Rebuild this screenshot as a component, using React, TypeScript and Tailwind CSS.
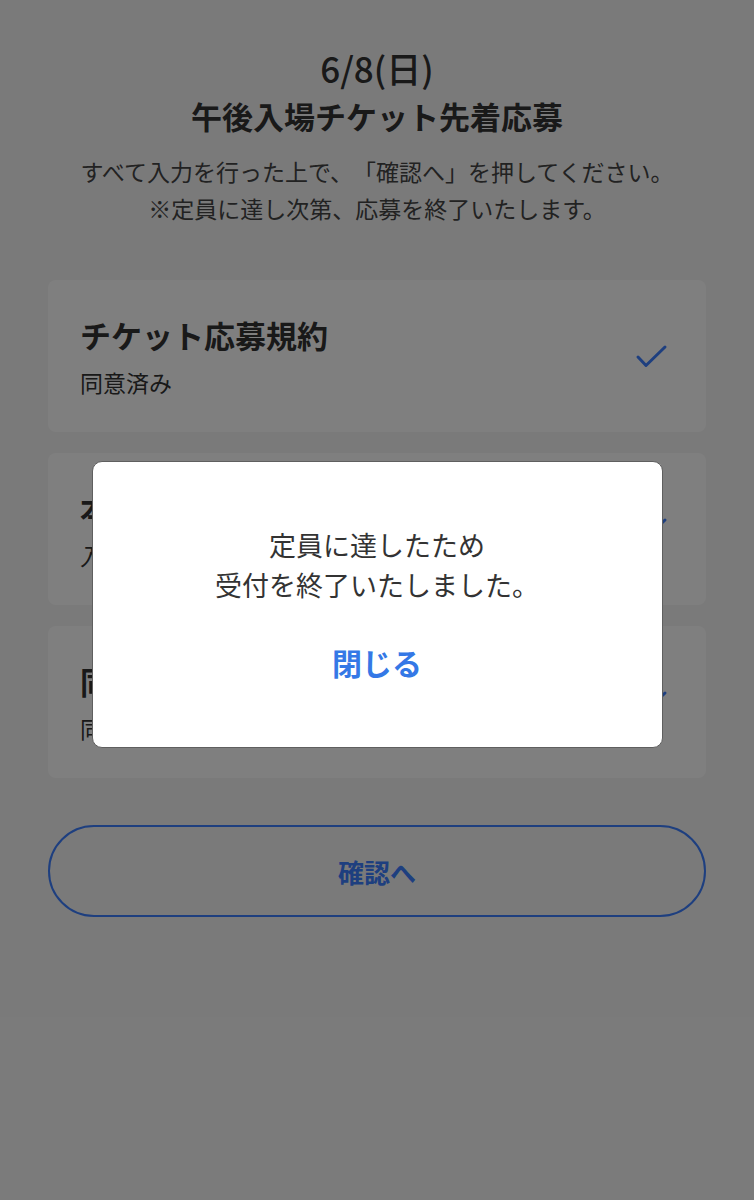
import React from 'react';

// 応募ステップ一覧
const steps = [
  { title: 'チケット応募規約', status: '同意済み' },
  { title: '本人情報入力', status: '入力済み' },
  { title: '同伴者情報', status: '同伴者なし' },
];

const font = { fontFamily: '"Noto Sans CJK JP", "Noto Sans", sans-serif' };

function CheckIcon() {
  return (
    <svg width="36" height="28" viewBox="0 0 36 28" fill="none">
      <path
        d="M4 15 L12 23.5 L31 5"
        stroke="#3c7eff"
        strokeWidth="3"
        strokeLinecap="round"
        strokeLinejoin="round"
      />
    </svg>
  );
}

export default function App() {
  return (
    <div
      className="relative min-h-[1200px] w-full bg-[#f5f5f5] text-[#333] [text-spacing-trim:space-all]"
      style={font}
    >
      {/* 本体 */}
      <div className="flex flex-col items-center pt-[45px] px-12">
        <h1 className="text-[35px] leading-[46px] font-medium text-[#333]">6/8(日)</h1>
        <h2 className="mt-[5px] text-[31px] leading-[40px] font-bold text-[#333]">
          午後入場チケット先着応募
        </h2>
        <p className="mt-[17px] text-center text-[23px] leading-[37px] text-[#444] whitespace-nowrap">
          すべて入力を行った上で、「確認へ」を押してください。
          <br />
          ※定員に達し次第、応募を終了いたします。
        </p>

        <div className="mt-[53px] flex w-full flex-col gap-[21px]">
          {steps.map((step) => (
            <div
              key={step.title}
              className="flex h-[152px] items-center justify-between rounded-[8px] bg-white pl-8 pr-[36px]"
            >
              <div>
                <div className="text-[31px] leading-[40px] font-bold text-[#333]">{step.title}</div>
                <div className="mt-[11px] text-[23px] leading-[32px] text-[#333]">{step.status}</div>
              </div>
              <CheckIcon />
            </div>
          ))}
        </div>

        <button className="mt-[47px] flex h-[92px] w-full items-center justify-center rounded-full border-2 border-[#3c7eff] bg-[#f5f5f5]">
          <span className="text-[26px] font-bold text-[#3c7eff]">確認へ</span>
        </button>
      </div>

      {/* オーバーレイ */}
      <div className="absolute inset-0 bg-black/50" />

      {/* ダイアログ */}
      <div className="absolute inset-x-0 top-[461px] flex justify-center">
        <div className="flex h-[287px] w-[571px] flex-col items-center rounded-[10px] border border-[#5f5f5f] bg-white pt-[63px]">
          <p className="text-center text-[27px] leading-[40px] text-[#333]">
            定員に達したため
            <br />
            受付を終了いたしました。
          </p>
          <button className="mt-[37px] text-[30px] leading-[40px] font-bold text-[#3478e6]">閉じる</button>
        </div>
      </div>
    </div>
  );
}
